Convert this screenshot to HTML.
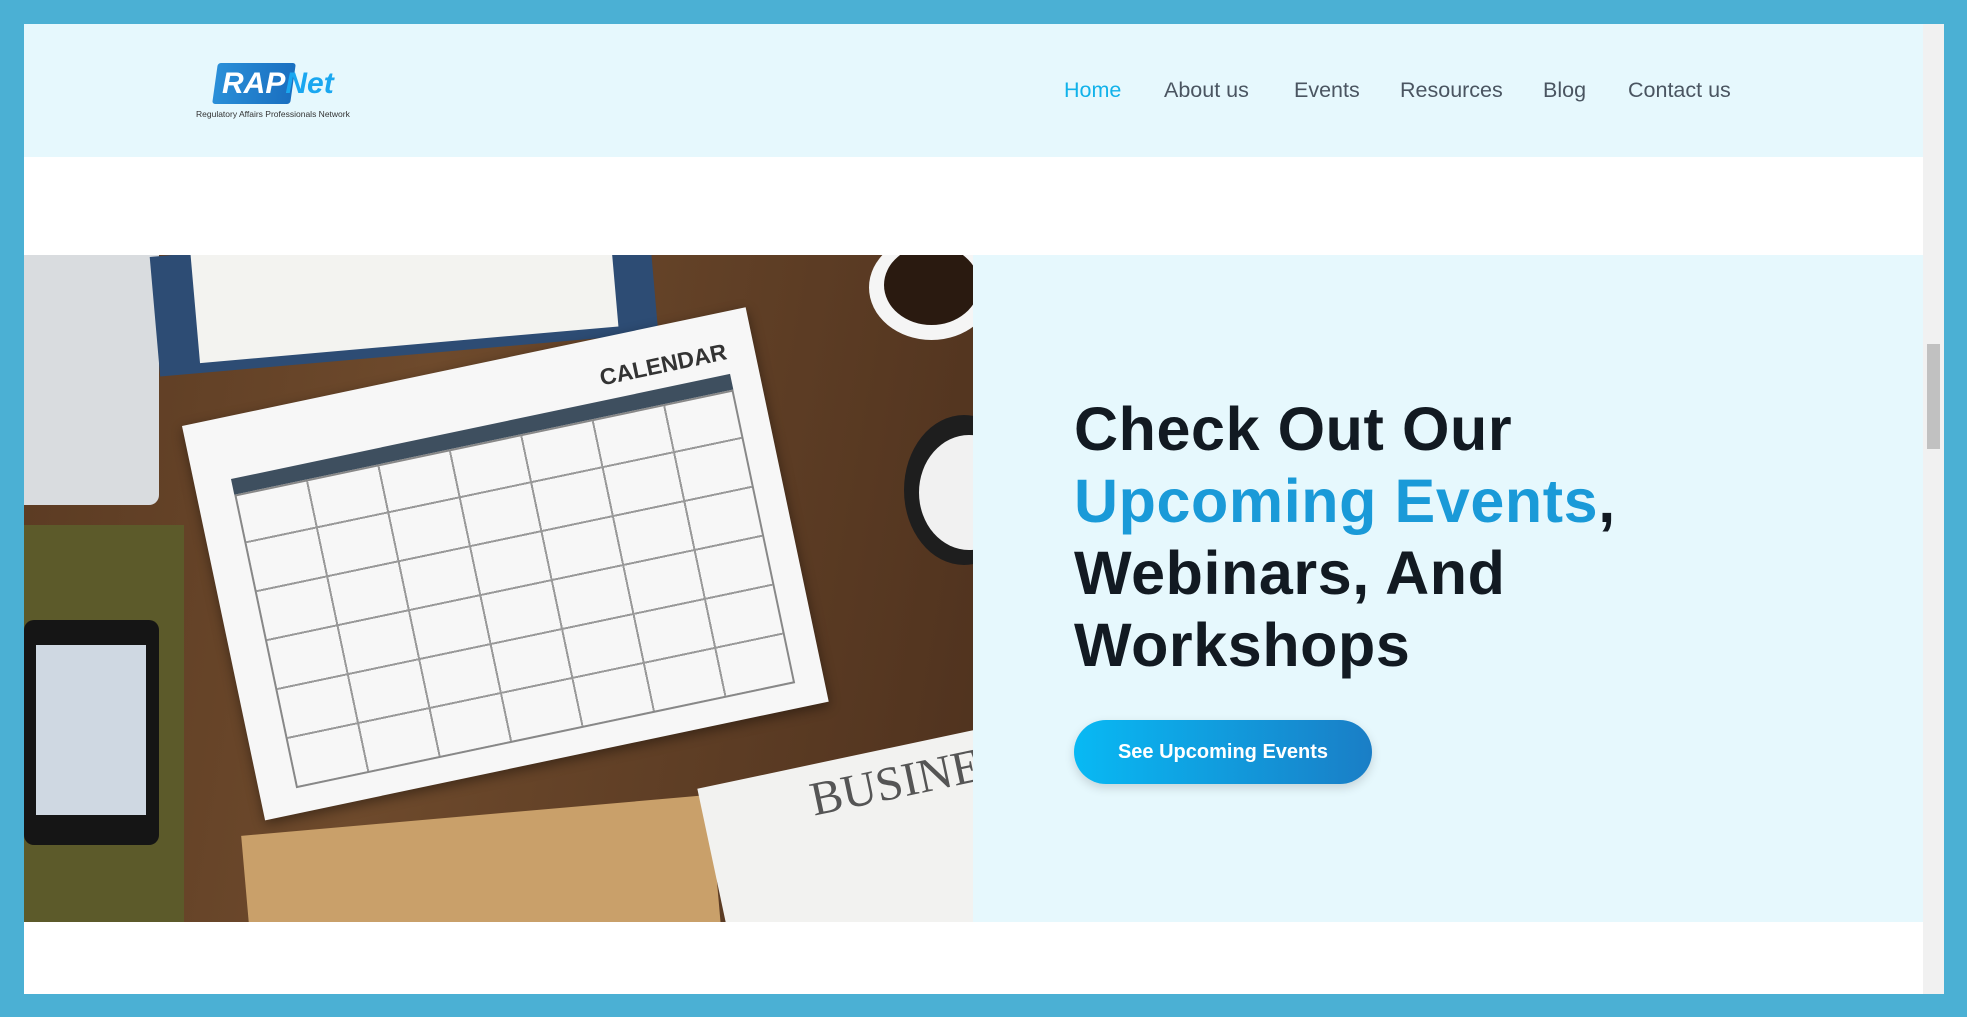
<!DOCTYPE html>
<html><head><meta charset="utf-8"><style>
*{margin:0;padding:0;box-sizing:border-box}
body{width:1967px;height:1017px;background:#4bb0d4;position:relative;overflow:hidden;font-family:"Liberation Sans",sans-serif}
.page{position:absolute;left:24px;top:24px;width:1899px;height:970px;background:#fff;overflow:hidden}
.sb{position:absolute;left:1923px;top:24px;width:21px;height:970px;background:#f1f1f1}
.thumb{position:absolute;left:4px;top:320px;width:13px;height:105px;background:#c1c1c1}
header{position:absolute;left:0;top:0;width:1899px;height:133px;background:#e6f8fd}
nav a{position:absolute;top:54px;font-size:21.5px;color:#4a5561;text-decoration:none;white-space:nowrap}
.hero{position:absolute;left:0;top:231px;width:1899px;height:667px;background:#e6f8fd}
.img{position:absolute;left:0;top:0;width:949px;height:667px;background:linear-gradient(100deg,#5a3a22,#6e4a2c 40%,#4f321e);overflow:hidden}
h1{position:absolute;left:1050px;top:138px;font-size:61px;line-height:72px;font-weight:bold;color:#121a22;letter-spacing:0.6px}
h1 span{color:#1a9ad8}
.btn{position:absolute;left:1050px;top:465px;width:298px;height:64px;border-radius:32px;background:linear-gradient(90deg,#08b9f4,#1a7ec6);color:#fff;font-size:20px;font-weight:bold;text-align:center;line-height:64px;box-shadow:0 4px 10px rgba(0,0,0,.15)}
.cal{position:absolute;left:158px;top:171px;width:576px;height:403px;background:#f7f7f7;transform:rotate(-11.9deg);transform-origin:0 0;box-shadow:0 4px 12px rgba(0,0,0,.4)}
</style></head><body>
<div class="page">
<header>
 <div style="position:absolute;left:191px;top:39px;width:78px;height:41px;background:linear-gradient(90deg,#2a8fd8,#1a6fc0);transform:skewX(-8deg);border-radius:3px"></div>
 <div style="position:absolute;left:198px;top:43px;font-size:30px;font-weight:bold;font-style:italic;color:#fff">RAP<span style="color:#1aa7f0">Net</span></div>
 <div style="position:absolute;left:172px;top:85px;font-size:8.5px;color:#333;white-space:nowrap">Regulatory Affairs Professionals Network</div>
 <nav>
  <a style="left:1040px;color:#11b2ea">Home</a>
  <a style="left:1140px">About us</a>
  <a style="left:1270px">Events</a>
  <a style="left:1376px">Resources</a>
  <a style="left:1519px">Blog</a>
  <a style="left:1604px">Contact us</a>
 </nav>
</header>
<div class="hero">
 <div class="img">
  <div style="position:absolute;left:-10px;top:-10px;width:145px;height:260px;background:#d9dcdf;border-radius:10px"></div>
  <div style="position:absolute;left:130px;top:-20px;width:500px;height:120px;background:#2d4c74;transform:rotate(-5deg)"></div>
  <div style="position:absolute;left:170px;top:-30px;width:420px;height:120px;background:#f3f3f0;transform:rotate(-5deg)"></div>
  <div style="position:absolute;left:845px;top:-20px;width:125px;height:105px;border-radius:50%;background:#f5f5f5"></div>
  <div style="position:absolute;left:860px;top:-10px;width:95px;height:80px;border-radius:50%;background:#2a1a10"></div>
  <div style="position:absolute;left:880px;top:160px;width:120px;height:150px;border-radius:50%;background:#1e1e1e"></div>
  <div style="position:absolute;left:895px;top:180px;width:100px;height:115px;border-radius:50%;background:#f1f1f1"></div>
  <div style="position:absolute;left:0;top:270px;width:160px;height:420px;background:#5c5a2a"></div>
  <div style="position:absolute;left:0;top:365px;width:135px;height:225px;background:#151515;border-radius:10px"></div>
  <div style="position:absolute;left:12px;top:390px;width:110px;height:170px;background:#cfd8e2"></div>
  <div class="cal">
   <div style="position:absolute;left:37px;top:62px;width:510px;height:16px;background:#3e4f5f"></div>
   <div style="position:absolute;left:37px;top:78px;width:510px;height:300px;border:2px solid #888;background:repeating-linear-gradient(90deg,transparent 0 71px,#999 71px 73px),repeating-linear-gradient(0deg,transparent 0 48px,#999 48px 50px)"></div>
   <div style="position:absolute;right:28px;top:26px;font-size:23px;font-weight:bold;color:#333">CALENDAR</div>
  </div>
  <div style="position:absolute;left:225px;top:560px;width:470px;height:200px;background:#c9a06a;transform:rotate(-5deg)"></div>
  <div style="position:absolute;left:695px;top:500px;width:300px;height:240px;background:#f2f2f0;transform:rotate(-12deg)"></div>
  <div style="position:absolute;left:785px;top:500px;font-family:'Liberation Serif',serif;font-size:48px;color:#555;transform:rotate(-12deg)">BUSINE</div>
 </div>
 <h1>Check Out Our<br><span>Upcoming Events</span>,<br>Webinars, And<br>Workshops</h1>
 <div class="btn">See Upcoming Events</div>
</div>
</div>
<div class="sb"><div class="thumb"></div></div>
</body></html>
